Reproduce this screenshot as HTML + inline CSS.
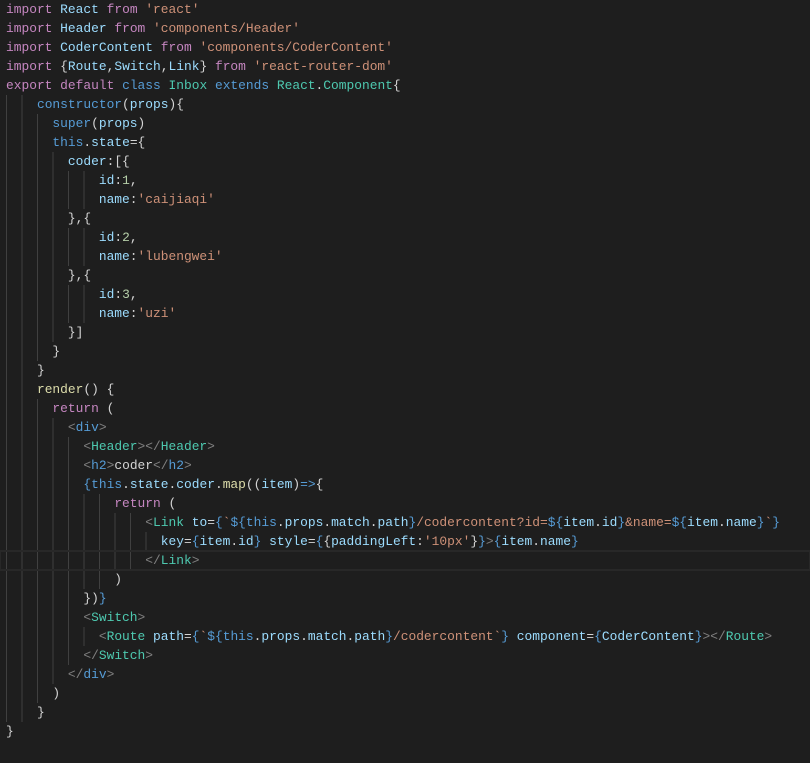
<!DOCTYPE html>
<html><head><meta charset="utf-8"><style>
html,body{margin:0;padding:0;background:#1e1e1e;width:810px;height:763px;overflow:hidden}
.c{position:absolute;left:0;top:0;width:810px;font-family:"Liberation Mono",monospace;font-size:12.9px;color:#d4d4d4}
.l{height:19px;line-height:19px;white-space:pre;padding-left:6px;box-sizing:border-box;
background-image:repeating-linear-gradient(90deg,#404040 0 1px,transparent 1px 15.5px);background-repeat:no-repeat;background-position:6px 0;background-size:calc(var(--c,0)*7.75px - 8px) 100%}
.cur{outline:2px solid #282828;outline-offset:-1px}
.k{color:#569cd6}.p{color:#c586c0}.s{color:#ce9178}.t{color:#4ec9b0}.v{color:#9cdcfe}.f{color:#dcdcaa}.g{color:#808080}
.b1,.b2,.b3{color:#d4d4d4}
</style></head><body><div class="c">
<div class="l"><span class="p">import</span> <span class="v">React</span> <span class="p">from</span> <span class="s">'react'</span></div>
<div class="l"><span class="p">import</span> <span class="v">Header</span> <span class="p">from</span> <span class="s">'components/Header'</span></div>
<div class="l"><span class="p">import</span> <span class="v">CoderContent</span> <span class="p">from</span> <span class="s">'components/CoderContent'</span></div>
<div class="l"><span class="p">import</span> {<span class="v">Route</span>,<span class="v">Switch</span>,<span class="v">Link</span>} <span class="p">from</span> <span class="s">'react-router-dom'</span></div>
<div class="l"><span class="p">export</span> <span class="p">default</span> <span class="k">class</span> <span class="t">Inbox</span> <span class="k">extends</span> <span class="t">React</span>.<span class="t">Component</span>{</div>
<div class="l" style="--c:4">    <span class="k">constructor</span>(<span class="v">props</span>){</div>
<div class="l" style="--c:6">      <span class="k">super</span>(<span class="v">props</span>)</div>
<div class="l" style="--c:6">      <span class="k">this</span>.<span class="v">state</span>={</div>
<div class="l" style="--c:8">        <span class="v">coder</span>:[{</div>
<div class="l" style="--c:12">            <span class="v">id</span>:<span style="color:#b5cea8">1</span>,</div>
<div class="l" style="--c:12">            <span class="v">name</span>:<span class="s">'caijiaqi'</span></div>
<div class="l" style="--c:8">        },{</div>
<div class="l" style="--c:12">            <span class="v">id</span>:<span style="color:#b5cea8">2</span>,</div>
<div class="l" style="--c:12">            <span class="v">name</span>:<span class="s">'lubengwei'</span></div>
<div class="l" style="--c:8">        },{</div>
<div class="l" style="--c:12">            <span class="v">id</span>:<span style="color:#b5cea8">3</span>,</div>
<div class="l" style="--c:12">            <span class="v">name</span>:<span class="s">'uzi'</span></div>
<div class="l" style="--c:8">        }]</div>
<div class="l" style="--c:6">      }</div>
<div class="l" style="--c:4">    }</div>
<div class="l" style="--c:4">    <span class="f">render</span>() {</div>
<div class="l" style="--c:6">      <span class="p">return</span> (</div>
<div class="l" style="--c:8">        <span class="g">&lt;</span><span class="k">div</span><span class="g">&gt;</span></div>
<div class="l" style="--c:10">          <span class="g">&lt;</span><span class="t">Header</span><span class="g">&gt;&lt;/</span><span class="t">Header</span><span class="g">&gt;</span></div>
<div class="l" style="--c:10">          <span class="g">&lt;</span><span class="k">h2</span><span class="g">&gt;</span>coder<span class="g">&lt;/</span><span class="k">h2</span><span class="g">&gt;</span></div>
<div class="l" style="--c:10">          <span class="k">{</span><span class="k">this</span>.<span class="v">state</span>.<span class="v">coder</span>.<span class="f">map</span>((<span class="v">item</span>)<span class="k">=&gt;</span>{</div>
<div class="l" style="--c:14">              <span class="p">return</span> (</div>
<div class="l" style="--c:18">                  <span class="g">&lt;</span><span class="t">Link</span> <span class="v">to</span>=<span class="k">{</span><span class="s">`</span><span class="k">${</span><span class="k">this</span>.<span class="v">props</span>.<span class="v">match</span>.<span class="v">path</span><span class="k">}</span><span class="s">/codercontent?id=</span><span class="k">${</span><span class="v">item</span>.<span class="v">id</span><span class="k">}</span><span class="s">&amp;name=</span><span class="k">${</span><span class="v">item</span>.<span class="v">name</span><span class="k">}</span><span class="s">`</span><span class="k">}</span></div>
<div class="l" style="--c:20">                    <span class="v">key</span>=<span class="k">{</span><span class="v">item</span>.<span class="v">id</span><span class="k">}</span> <span class="v">style</span>=<span class="k">{</span>{<span class="v">paddingLeft</span>:<span class="s">'10px'</span>}<span class="k">}</span><span class="g">&gt;</span><span class="k">{</span><span class="v">item</span>.<span class="v">name</span><span class="k">}</span></div>
<div class="l cur" style="--c:18">                  <span class="g">&lt;/</span><span class="t">Link</span><span class="g">&gt;</span></div>
<div class="l" style="--c:14">              )</div>
<div class="l" style="--c:10">          })<span class="k">}</span></div>
<div class="l" style="--c:10">          <span class="g">&lt;</span><span class="t">Switch</span><span class="g">&gt;</span></div>
<div class="l" style="--c:12">            <span class="g">&lt;</span><span class="t">Route</span> <span class="v">path</span>=<span class="k">{</span><span class="s">`</span><span class="k">${</span><span class="k">this</span>.<span class="v">props</span>.<span class="v">match</span>.<span class="v">path</span><span class="k">}</span><span class="s">/codercontent`</span><span class="k">}</span> <span class="v">component</span>=<span class="k">{</span><span class="v">CoderContent</span><span class="k">}</span><span class="g">&gt;&lt;/</span><span class="t">Route</span><span class="g">&gt;</span></div>
<div class="l" style="--c:10">          <span class="g">&lt;/</span><span class="t">Switch</span><span class="g">&gt;</span></div>
<div class="l" style="--c:8">        <span class="g">&lt;/</span><span class="k">div</span><span class="g">&gt;</span></div>
<div class="l" style="--c:6">      )</div>
<div class="l" style="--c:4">    }</div>
<div class="l">}</div>
</div></body></html>
